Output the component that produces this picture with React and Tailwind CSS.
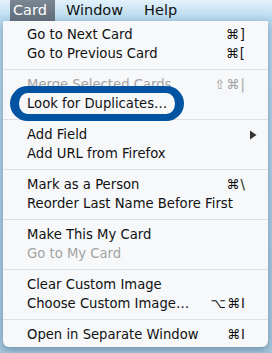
import { Fragment } from 'react'

const groups = [
  [
    { label: 'Go to Next Card', key: '⌘]' },
    { label: 'Go to Previous Card', key: '⌘[' },
  ],
  [
    { label: 'Merge Selected Cards', key: '⇧⌘|', disabled: true },
    { label: 'Look for Duplicates…' },
  ],
  [
    { label: 'Add Field', submenu: true },
    { label: 'Add URL from Firefox' },
  ],
  [
    { label: 'Mark as a Person', key: '⌘\\' },
    { label: 'Reorder Last Name Before First' },
  ],
  [
    { label: 'Make This My Card' },
    { label: 'Go to My Card', disabled: true },
  ],
  [
    { label: 'Clear Custom Image' },
    { label: 'Choose Custom Image…', key: '⌥⌘I' },
  ],
  [{ label: 'Open in Separate Window', key: '⌘I' }],
]

function Row({ item }) {
  return (
    <div
      className={`flex h-[19px] items-center justify-between pl-[24px] pr-[22px] ${
        item.disabled ? 'text-[#a3a3a3]' : 'text-[#111]'
      }`}
    >
      <span>{item.label}</span>
      {item.key && <span className="tracking-[1px]">{item.key}</span>}
      {item.submenu && (
        <svg width="8" height="10" viewBox="0 0 8 10" className="mr-[-11px]">
          <path d="M1 0.5 L7.5 5 L1 9.5 Z" fill="#333" />
        </svg>
      )}
    </div>
  )
}

export default function App() {
  return (
    <div className="relative h-[353px] w-[272px] overflow-hidden bg-gradient-to-b from-[#b9d9ee] to-[#a6c9df] font-['DejaVu_Sans',sans-serif] text-[13.2px] leading-none">
      <div className="flex h-[21px] items-center bg-gradient-to-b from-[#e3f2fb] to-[#b3d6ec] text-[14.5px] text-[#111]">
        <span className="ml-[10px] flex h-full items-center bg-gradient-to-b from-[#7c8794] to-[#5f6b78] pl-[3px] pr-[8px] text-white">
          Card
        </span>
        <span className="ml-[11px]">Window</span>
        <span className="ml-[21px]">Help</span>
      </div>

      <div className="mx-[3px] mt-0 w-[265px] rounded-b-[6px] bg-[#f6f8fa] pb-[3px] pt-[4px] shadow-[0_3px_8px_rgba(40,70,100,0.45)]">
        {groups.map((g, i) => (
          <Fragment key={i}>
            {i > 0 && (
              <div className="flex h-[12px] items-center">
                <div className="h-px w-full bg-[#dcdfe3]" />
              </div>
            )}
            {g.map(item => (
              <Row key={item.label} item={item} />
            ))}
          </Fragment>
        ))}
      </div>

      <div className="absolute left-[10px] top-[86px] h-[35px] w-[174px] rounded-full border-[7px] border-x-[9px] border-[#0253a1]" />
    </div>
  )
}
